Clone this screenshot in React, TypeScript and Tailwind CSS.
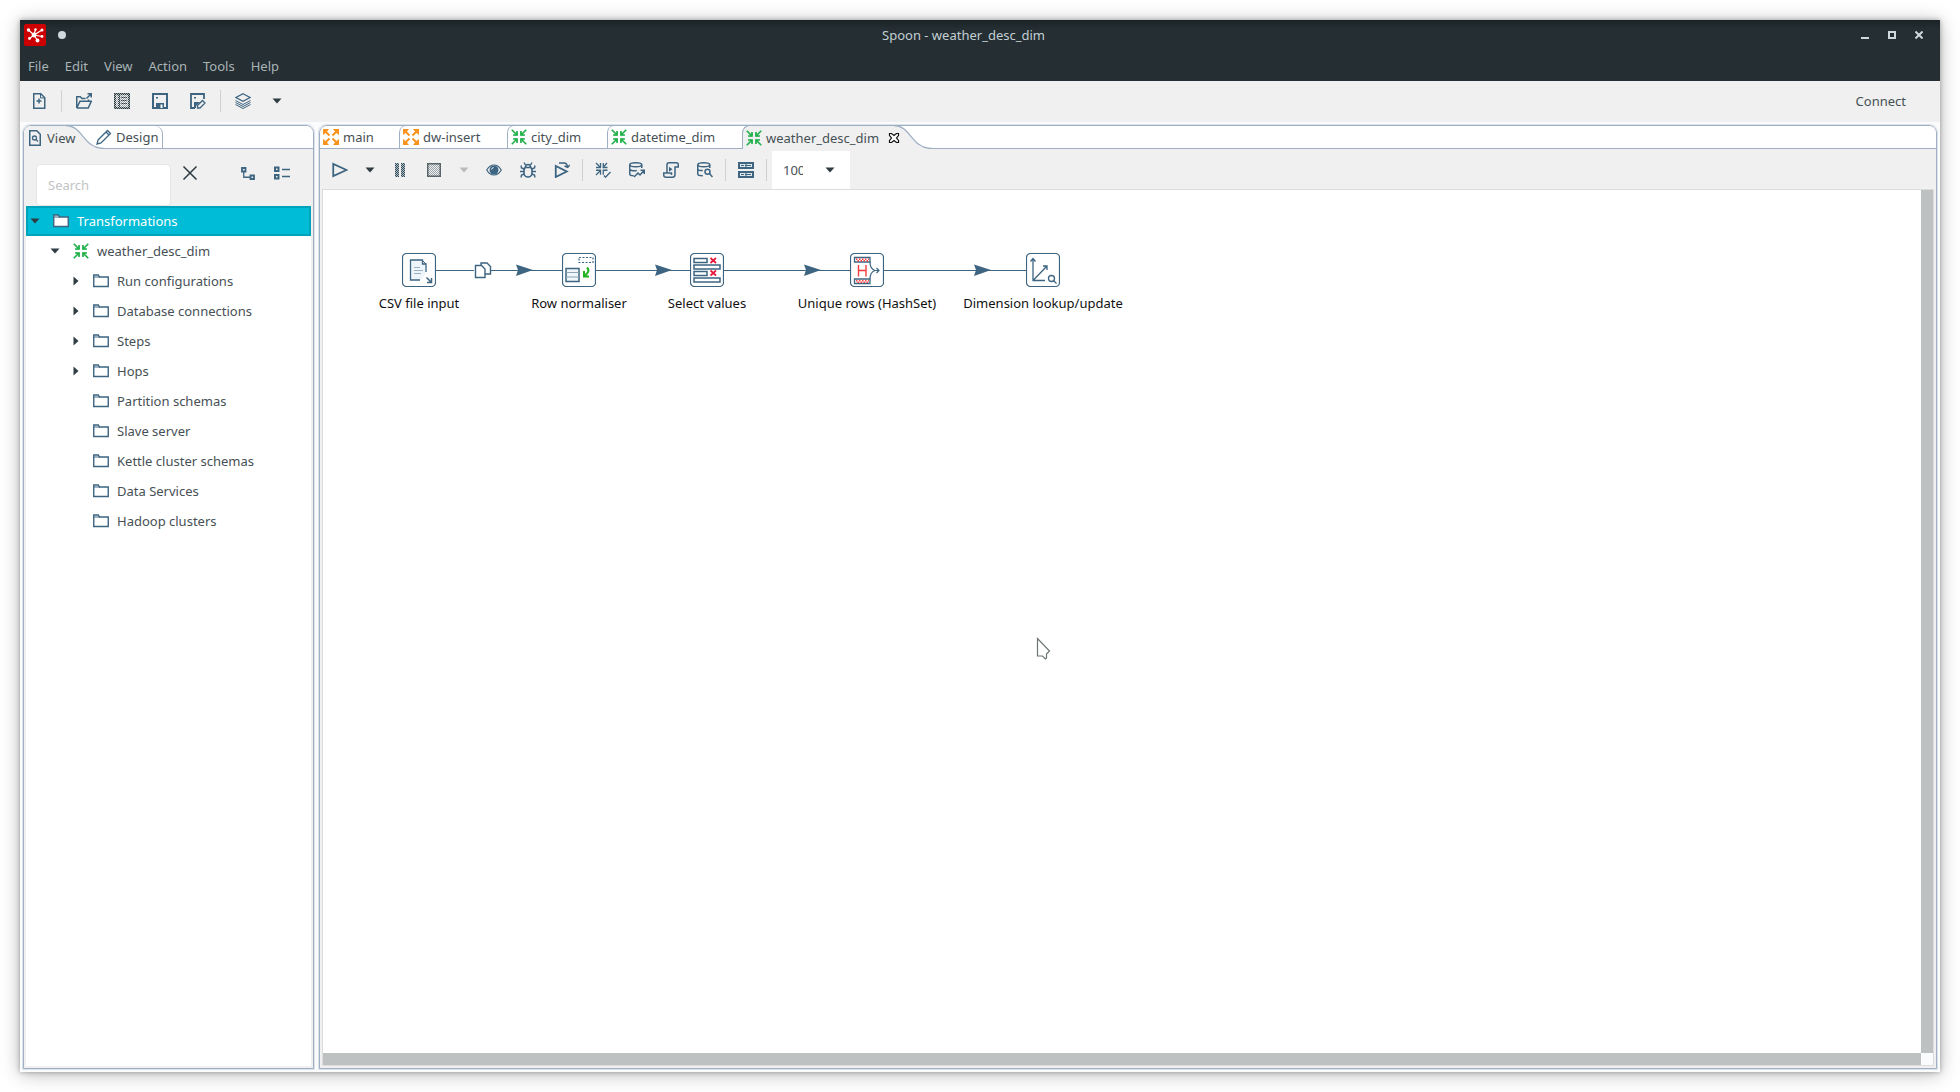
import React, { useState } from "react";

const INK = "#3d6480";

function Svg({ children, w = 16, h = 16, className = "" }: { children: React.ReactNode; w?: number; h?: number; className?: string }) {
  return (
    <svg width={w} height={h} viewBox={`0 0 ${w} ${h}`} fill="none" stroke={INK} strokeWidth="1.5" className={`shrink-0 ${className}`} aria-hidden="true">
      {children}
    </svg>
  );
}

/* ---------- icons ---------- */
const AppLogo = () => (
  <svg width="22" height="22" viewBox="0 0 22 22" className="shrink-0" aria-hidden="true">
    <rect width="22" height="22" rx="2" fill="#cc0000" />
    <path d="M10 11 4.500 6M10 11 11.500 5.500M10 11 18 6M10 11 18 12.500M10 11 13.500 16.500M10 11 5.500 14.500" stroke="#fff" strokeWidth="1.200" />
    <g fill="#fff">
      <circle cx="10" cy="11" r="2.400" />
      <circle cx="4.500" cy="6" r="1.700" />
      <circle cx="11.500" cy="5.500" r="1.200" />
      <circle cx="18" cy="6" r="1.500" />
      <circle cx="18" cy="12.500" r="1.400" />
      <circle cx="13.500" cy="16.500" r="1.900" />
      <circle cx="5.500" cy="14.500" r="1.400" />
    </g>
  </svg>
);
const NewFile = () => (
  <Svg>
    <path d="M2.750.75h7l4 4v10.500h-11zM8 5.500v5M5.500 8h5" />
    <path d="M9.500 1v4h4" strokeWidth="1" />
  </Svg>
);
const OpenFile = () => (
  <Svg>
    <path d="M.75 15V3.750h3.500L6 5.500h3.500M.75 15h11.500l3-6.750H4L.75 15M12.500 8V6.500" />
    <path d="M10.500 5.500 15 1M11.500.75h3.750V4.500" />
  </Svg>
);
const Checker = ({ id }: { id: string }) => (
  <defs>
    <pattern id={id} width="2" height="2" patternUnits="userSpaceOnUse">
      <rect width="1" height="1" fill="#2b3940" stroke="none" />
      <rect x="1" y="1" width="1" height="1" fill="#2b3940" stroke="none" />
    </pattern>
    <pattern id={id + "-soft"} width="2" height="2" patternUnits="userSpaceOnUse">
      <rect width="1" height="1" fill="#9aa3a8" stroke="none" />
      <rect x="1" y="1" width="1" height="1" fill="#9aa3a8" stroke="none" />
    </pattern>
  </defs>
);
const Repository = () => (
  <Svg>
    <Checker id="ck-repo" />
    <g stroke="none">
      <path d="M0 0h16v16H0z" fill="url(#ck-repo-soft)" />
      <path d="M0 0h16v16H0zM2 2v12h12V2z" fillRule="evenodd" fill="url(#ck-repo)" />
      <path d="M4 2h2v12H4zM7 4h6v1H7zM7 7h6v1H7zM7 10h6v1H7z" fill="url(#ck-repo)" />
      <path d="M0 0h16v16H0zM1.500 1.500v13h13v-13z" fillRule="evenodd" fill="#2b3940" opacity=".45" />
      <path d="M5 2h1v12H5zM7 4h6v1H7zM7 7h6v1H7zM7 10h6v1H7z" fill="#2b3940" opacity=".45" />
    </g>
  </Svg>
);
const Save = () => (
  <Svg>
    <rect x="1" y="1" width="14" height="14" strokeWidth="2" />
    <path d="M4 10h8v5H4z" fill={INK} stroke="none" />
    <path d="M8.500 11.500h2V15h-2z" fill="#fff" stroke="none" />
    <path d="M4 4h2v1.500H4z" fill={INK} stroke="none" />
  </Svg>
);
const SaveAs = () => (
  <Svg>
    <path d="M14 6V1H1v14h4" strokeWidth="1.800" />
    <path d="M4 4h2v1.500H4zM4 9h6l-4 4v2H4z" fill={INK} stroke="none" />
    <path d="m7.500 12.500 5-5 2.500 2.500-5 5H7.500z" strokeWidth="1.300" />
  </Svg>
);
const Layers = () => (
  <Svg>
    <path d="M8 .75 15 4.500 8 8.250 1 4.500z" strokeWidth="1.200" />
    <path d="m.5 7.500 7.500 4 7.500-4M.5 9.500l7.500 4 7.500-4M.5 11.500l7.500 4 7.500-4" strokeWidth="1" />
  </Svg>
);
const Caret = ({ color = "#2f3d43" }: { color?: string }) => (
  <svg width="10" height="6" viewBox="0 0 10 6" className="shrink-0" aria-hidden="true">
    <path d="M.5.500h9L5 5.500z" fill={color} />
  </svg>
);
const CaretRight = () => (
  <svg width="6" height="10" viewBox="0 0 6 10" className="shrink-0" aria-hidden="true">
    <path d="M.5.500v9L5.500 5z" fill="#2f3d43" />
  </svg>
);
const ViewIcon = () => (
  <Svg w={12}>
    <path d="M.75.750h7l3.500 3.500v11H.75z" />
    <circle cx="5.500" cy="8" r="2" strokeWidth="1.300" />
    <path d="M7 9.500 9 11.500" strokeWidth="1.300" />
  </Svg>
);
const DesignIcon = () => (
  <Svg>
    <path d="M2 11 11.500 1.500l3 3L5 14l-4 1zM10 3l3 3" strokeWidth="1.300" />
  </Svg>
);
const Run = () => (
  <Svg>
    <path d="M1.250 2v12L14.500 8z" strokeWidth="1.800" />
  </Svg>
);
const Pause = () => (
  <Svg>
    <Checker id="ck-pause" />
    <path d="M3 1h4v14H3zM9 1h4v14H9z" fill="url(#ck-pause)" stroke="none" />
    <path d="M3 1h4v14H3zM9 1h4v14H9z" fill={INK} opacity=".35" stroke="none" />
  </Svg>
);
const Stop = () => (
  <Svg>
    <Checker id="ck-stop" />
    <path d="M1 1h14v14H1z" fill="url(#ck-stop-soft)" stroke="none" />
    <path d="M1 1h14v14H1zM2.500 2.500v11h11v-11z" fillRule="evenodd" fill="#2b3940" opacity=".7" stroke="none" />
  </Svg>
);
const Eye = () => (
  <Svg>
    <path d="M.75 8C3 4 5.500 3 8 3s5 1 7.250 5C13 12 10.500 13 8 13S3 12 .75 8z" strokeWidth="1.200" />
    <circle cx="8" cy="8" r="4.500" fill={INK} stroke="none" />
    <path d="M5.500 7.500A2.500 2.500 0 0 1 7.500 5.500" stroke="#fff" strokeWidth="1" />
  </Svg>
);
const Bug = () => (
  <Svg>
    <path d="M5 5.500h6l1 2.500v3c0 2.500-2 4-4 4s-4-1.500-4-4V8zM5.500 5.500C5.500 1.500 10.500 1.500 10.500 5.500" strokeWidth="1.600" />
    <path d="M5.500 3 4 .5M10.500 3 12 .5M4.500 7 1.500 6 1 3.500M11.500 7l3-1L15 3.500M4 9.500H0M12 9.500h4M4.500 12l-3 1L1 15.500M11.500 12l3 1 .5 2.500" strokeWidth="1.400" />
  </Svg>
);
const Replay = () => (
  <Svg>
    <path d="M1.750 4v11l11-5.500z" strokeWidth="1.800" />
    <path d="M5 1h5.500c1.500 0 2.500 1.500 3 3.500M15.750 3l-2 2.500L10.500 4" strokeWidth="1.400" />
  </Svg>
);
/* four arrows pointing at the centre */
const ArrowsIn = ({ color = "#22b14c" }: { color?: string }) => (
  <Svg>
    <g stroke={color} strokeWidth="1.700">
      <path d="M.75.750 5.500 5.500M15.250.750 10.500 5.500M.75 15.250 5.500 10.500M15.250 15.250 10.500 10.500" />
      <path d="M2 6h4V2M14 6h-4V2M2 10h4v4M14 10h-4v4" />
    </g>
    <path d="M3 6.500h3.500V3zM13 6.500H9.500V3zM3 9.500h3.500V13zM13 9.500H9.500V13z" fill={color} stroke="none" />
  </Svg>
);
/* four arrows pointing outwards */
const ArrowsOut = () => (
  <Svg>
    <path d="M6.500 6.500 2 2M9.500 6.500 14 2M6.500 9.500 2 14M9.500 9.500 14 14" stroke="#f7941e" strokeWidth="2" />
    <path d="M0 0h6L4.500 2 2 4.500 0 6zM16 0v6l-2-1.500L11.500 2 10 0zM0 16v-6l2 1.500L4.500 14 6 16zM16 16h-6l1.500-2 2.500-2.500 2-1.500z" fill="#f7941e" stroke="none" />
  </Svg>
);
const Verify = () => (
  <Svg>
    <g strokeWidth="1.300">
      <path d="m1 1 4 4M12 1 8.500 5M1 13l4-4" />
      <path d="M1 5.500h4.500V1M12.500 5.500H8.250V1M1 8.250h4.500v4.500M12.500 8.250H8.250v4.500" />
      <path d="m9 13.500 1.500 1.750L15.500 10" />
    </g>
  </Svg>
);
const Impact = () => (
  <Svg>
    <ellipse cx="6.750" cy="2.750" rx="6" ry="2" />
    <path d="M.75 2.750V12c0 1 2 1.750 4 1.750M12.750 2.750V6M.75 7.500c1 1.250 5 1.500 7 1" />
    <path d="M5 15l4-4 2 2 4-4.500M11.500 8.250h3.750V12" />
  </Svg>
);
const Sql = () => (
  <Svg>
    <path d="M4 11V2.500C4 1.500 5 .750 6 .750h7.500c1 0 1.750.750 1.750 2V5H12v7.500c0 1.500-1 2.750-2.500 2.750H3C1.500 15.250.75 14 .75 13v-2H8.500v2" />
    <path d="M6 4.750v5L9.500 7.250z" fill={INK} stroke="none" />
  </Svg>
);
const Explore = () => (
  <Svg>
    <ellipse cx="6.750" cy="2.750" rx="6" ry="2" />
    <path d="M.75 2.750V12c0 1 2 1.750 5 1.750M12.750 2.750V6M.75 7.500c1 1 3 1.250 5 1" />
    <circle cx="10.500" cy="9.750" r="2.500" />
    <path d="m12.500 11.500 3 3.500" />
  </Svg>
);
const Results = () => (
  <Svg>
    <path d="M0 0h16v7H0zM0 9h16v7H0z" fill={INK} stroke="none" />
    <path d="M2 2h12v3H2zM2 11h12v3H2z" fill="#dfe6ea" stroke="none" />
    <path d="M3 3.500h3M7 3.500h6M3 12.500h3M7 12.500h6M8 2v3M8 11v3" strokeWidth="1" />
  </Svg>
);
const Clear = () => (
  <Svg>
    <path d="m1.500 1.500 13 13M14.500 1.500l-13 13" stroke="#2b3940" strokeWidth="1.500" />
  </Svg>
);
const ExpandTree = () => (
  <Svg>
    <path d="M2 2h3.500v3.500H2zM10.500 9.500H14V13h-3.500z" strokeWidth="1.800" />
    <path d="M3.750 5.500v5.750h6.500" strokeWidth="1.300" />
  </Svg>
);
const CollapseTree = () => (
  <Svg>
    <path d="M1 2.500h3.500V6H1zM1 10h3.500v3.500H1z" strokeWidth="2" />
    <path d="M8 4.500h8M8 11.500h8" strokeWidth="1.300" />
  </Svg>
);
const Folder = ({ filled = false }: { filled?: boolean }) => (
  <Svg>
    <path d="M.75 2h4.500L6.500 4h8.750v9.500H.75z" fill={filled ? "#fff" : "none"} strokeWidth="1.400" />
    <path d="M1 4h6" strokeWidth="1" />
  </Svg>
);
const CloseTab = () => (
  <svg width="12" height="12" viewBox="0 0 12 12" aria-hidden="true">
    <path d="M1.500 1.500h2L6 3.500l2.500-2h2v2L8.500 6l2 2.500v2h-2L6 8.500l-2.500 2h-2v-2l2-2.500-2-2.500z" fill="#fff" stroke="#111" strokeWidth="1.200" />
  </svg>
);

/* ---------- toolbar parts ---------- */
function ToolButton({ label, size = "normal", disabled, children }: { label: string; size?: "normal" | "wide" | "caret" | "widecaret"; disabled?: boolean; children: React.ReactNode }) {
  const width = { normal: "w-[34px]", wide: "w-[38px]", caret: "w-[26px]", widecaret: "w-[30px]" }[size];
  return (
    <button type="button" aria-label={label} title={label} disabled={disabled} className={`flex h-8 items-center justify-center ${width}`}>
      {children}
    </button>
  );
}
const Separator = () => (
  <div className="flex w-[7px] justify-center">
    <div className="h-[22px] w-px bg-[#d0d0d0]" />
  </div>
);

function TabEdge() {
  return (
    <svg width="10" height="24" viewBox="0 0 10 24" fill="none" className="absolute top-0 left-0" aria-hidden="true">
      <path d="M.5 24V8C.5 4 3 .5 7 .5" stroke="#9fb0c4" />
    </svg>
  );
}
function ActiveSwoop() {
  return (
    <svg width="40" height="24" viewBox="0 0 40 24" className="absolute top-0 left-full" aria-hidden="true">
      <path d="M0 1C17 1 17 23.500 38 23.500V24H0z" fill="#f0f0f0" />
      <path d="M0 .5C17 .5 17 23.500 38 23.500" fill="none" stroke="#9fb0c4" strokeWidth="1.300" />
    </svg>
  );
}

const tabs = [
  { name: "main", out: true, width: "w-20" },
  { name: "dw-insert", out: true, width: "w-[108px]" },
  { name: "city_dim", out: false, width: "w-[100px]" },
  { name: "datetime_dim", out: false, width: "w-[135px]" },
];

const folders = [
  { name: "Run configurations", open: true },
  { name: "Database connections", open: true },
  { name: "Steps", open: true },
  { name: "Hops", open: true },
  { name: "Partition schemas" },
  { name: "Slave server" },
  { name: "Kettle cluster schemas" },
  { name: "Data Services" },
  { name: "Hadoop clusters" },
];

/* ---------- canvas ---------- */
function CsvStep() {
  return (
    <g>
      <path d="M8.500 7h11l4 4v9l-4 6.500h-11z" fill="#eef6fc" stroke="none" />
      <path d="M24 19v-8h-3.500V7H8.500v20H18" strokeWidth="1.300" />
      <path d="M20.500 7.500 24 11" strokeWidth="1" />
      <path d="M12 14.500h6M12 17.500h9M12 20.500h7" stroke="#9ab2c4" strokeWidth="1" />
      <path d="m24.500 24.500 5 5M29.500 25v4.500H25" strokeWidth="1.500" />
    </g>
  );
}
function NormaliserStep() {
  return (
    <g>
      <rect x="17" y="4.500" width="14" height="5" strokeDasharray="2 1.500" strokeWidth="1.200" />
      <rect x="4" y="15.500" width="13" height="13" fill="#f1f6fa" />
      <path d="M4 19.500h13M4 24h13" strokeWidth="1" stroke="#8aa3b5" />
      <path d="M25 14.500c3 3 1 6-3 8.500M22 18v5.500h5" stroke="#1fb41f" strokeWidth="2" />
    </g>
  );
}
function SelectStep() {
  return (
    <g>
      <rect x="4" y="5.500" width="13" height="4" />
      <rect x="4" y="12" width="26" height="4" />
      <rect x="4" y="18.500" width="13" height="4" />
      <rect x="4" y="25" width="26" height="4" />
      <path d="m20.500 5 5.500 5M26 5l-5.500 5M20.500 17.500l5.500 5M26 17.500l-5.500 5" stroke="#e8173b" strokeWidth="1.700" />
    </g>
  );
}
function UniqueStep() {
  return (
    <g>
      <path d="M4.500 4.500h15.500v4.500H4.500zM4.500 26h15.500v4.500H4.500z" strokeWidth="1.300" />
      <path d="M6 6.200h13M6 27.700h13" stroke="#ff4040" strokeDasharray="1.500 1.500" strokeWidth="1.500" />
      <path d="M7.500 7.700h12M7.500 29.200h12" stroke="#ff4040" strokeDasharray="1.500 1.500" strokeWidth="1.500" />
      <path d="M8.500 12v11.500M16 12v11.500M8.500 17.500H16" stroke="#f23b3b" strokeWidth="1.400" />
      <path d="M20 9c0 5 2 7.500 5 8.500M20 26c0-5 2-7.500 5-8.500M24 17.500h5M26.500 15l2.500 2.500-2.500 2.500" strokeWidth="1.200" />
    </g>
  );
}
function DimensionStep() {
  return (
    <g>
      <path d="M7 6v21.500h12M7.500 27 20.500 13.500M4.500 8.500 7 5.500l2.500 3M17 13h4v4" strokeWidth="1.300" />
      <circle cx="25.500" cy="25.500" r="3" strokeWidth="1.300" />
      <path d="m27.500 27.500 3 3" strokeWidth="1.300" />
    </g>
  );
}

const steps = [
  { name: "CSV file input", pos: "left-[6px]", icon: <CsvStep /> },
  { name: "Row normaliser", pos: "left-[166px]", icon: <NormaliserStep /> },
  { name: "Select values", pos: "left-[294px]", icon: <SelectStep /> },
  { name: "Unique rows (HashSet)", pos: "left-[454px]", icon: <UniqueStep /> },
  { name: "Dimension lookup/update", pos: "left-[630px]", icon: <DimensionStep /> },
];

function Canvas() {
  return (
    <div className="relative min-w-0 flex-1 overflow-hidden bg-white">
      <svg width="760" height="100" viewBox="0 0 760 100" fill="none" className="absolute top-0 left-0" aria-hidden="true">
        <path d="M113 80.500h38M167 80.500h72M273 80.500h94M401 80.500h126M561 80.500h142" stroke={INK} />
        <path d="M193 74.500 210 80 193 86 195 80zM332 74.500 349 80 332 86 334 80zM481 74.500 498 80 481 86 483 80zM651 74.500 668 80 651 86 653 80z" fill={INK} />
        <g stroke={INK} strokeWidth="1.400" fill="#fff">
          <path d="M158 84V73h6l3.500 3.500V84z" />
          <path d="M152.500 75.500h6l3.500 3.500v8.500h-9.500z" />
        </g>
      </svg>
      {steps.map((s) => (
        <div key={s.name} className={`absolute top-[63px] flex w-[180px] flex-col items-center gap-[7px] ${s.pos}`}>
          <svg width="34" height="34" viewBox="0 0 34 34" fill="none" stroke={INK} strokeWidth="1.500" aria-hidden="true">
            <rect x=".5" y=".5" width="33" height="33" rx="4" strokeWidth="1.200" fill="#fff" />
            {s.icon}
          </svg>
          <span className="leading-[18px] whitespace-nowrap text-[#111]">{s.name}</span>
        </div>
      ))}
      <svg width="16" height="24" viewBox="0 0 16 24" className="absolute top-[447px] left-[713px]" aria-hidden="true">
        <path d="M1.500 1.500v17.500h5l3 3 1-1v-4l3-3z" fill="#fff" stroke="#6c7674" strokeWidth="1.200" />
      </svg>
    </div>
  );
}

const menus = ["File", "Edit", "View", "Action", "Tools", "Help"];

export default function App() {
  const [query, setQuery] = useState("");
  const [zoom, setZoom] = useState("100%");
  return (
    <div className="flex min-h-screen bg-white p-5 font-['Noto_Sans',sans-serif] text-[13px] leading-5 text-[#465055]">
      <div className="flex min-w-0 flex-1 flex-col bg-[#fafbfd] shadow-[0_2px_18px_rgba(0,0,0,0.28),0_0_5px_rgba(0,0,0,0.3)]">
        <header className="bg-[#242e33] bg-linear-to-b from-[#1b2325] from-0% to-[#242e33] to-15%">
          <div className="flex h-[30px] items-center pl-1">
            <AppLogo />
            <span className="ml-3 size-2 rounded-full bg-[#cfd8dc]" />
            <h1 className="flex-1 pl-2.5 text-center text-[#c3ced2]">Spoon - weather_desc_dim</h1>
            <div className="flex items-center pr-2">
              <button type="button" aria-label="Minimize" className="flex h-7 w-[27px] items-center justify-center">
                <Svg w={8} h={8}><path d="M0 7h8" stroke="#cfd8dc" strokeWidth="2" /></Svg>
              </button>
              <button type="button" aria-label="Maximize" className="flex h-7 w-[27px] items-center justify-center">
                <Svg w={8} h={8}><path d="M1 1h6v6H1z" stroke="#cfd8dc" strokeWidth="2" /></Svg>
              </button>
              <button type="button" aria-label="Close" className="flex h-7 w-[27px] items-center justify-center">
                <Svg w={8} h={8}><path d="m.5.500 7 7M7.500.500l-7 7" stroke="#cfd8dc" strokeWidth="2" /></Svg>
              </button>
            </div>
          </div>
          <nav className="flex h-[31px] items-center gap-4 px-2 text-[#a9b4b6]">
            {menus.map((m) => (
              <button type="button" key={m}>{m}</button>
            ))}
          </nav>
        </header>

        <div className="flex h-[41px] items-center bg-[#f0f0f0] pb-px">
          <ToolButton label="New file" size="wide"><NewFile /></ToolButton>
          <Separator />
          <ToolButton label="Open file" size="wide"><OpenFile /></ToolButton>
          <ToolButton label="Explore repository" size="wide"><Repository /></ToolButton>
          <ToolButton label="Save" size="wide"><Save /></ToolButton>
          <ToolButton label="Save as" size="wide"><SaveAs /></ToolButton>
          <Separator />
          <ToolButton label="Perspective" size="wide"><Layers /></ToolButton>
          <ToolButton label="Choose perspective" size="widecaret"><Caret /></ToolButton>
          <button type="button" className="mr-[34px] ml-auto">Connect</button>
        </div>

        <main className="flex min-h-0 flex-1 gap-[3px] px-0.5 pt-0.5 pb-0.5">
          <aside className="flex w-[293px] shrink-0 flex-col rounded-t-lg border border-[#dde1e8]">
            <div className="flex flex-1 flex-col overflow-hidden rounded-t-lg border border-[#9fb0c4] bg-[#f0f0f0]">
              <div role="tablist" className="flex h-[23px] border-b border-[#9fb0c4] bg-white">
                <button type="button" role="tab" aria-selected="true" className="relative -mb-px flex h-[23px] w-[42px] items-center gap-1.5 bg-[#f0f0f0] pl-[5px]">
                  <div className="absolute -top-px left-full"><ActiveSwoop /></div>
                  <ViewIcon />
                  <span className="relative">View</span>
                </button>
                <button type="button" role="tab" aria-selected="false" className="ml-[26px] flex h-[22px] w-[71px] items-center gap-1 rounded-tr-lg border-r border-[#9fb0c4] pl-1">
                  <DesignIcon />
                  Design
                </button>
              </div>
              <div className="flex h-[57px] items-start pt-[15px] pl-3">
                <input
                  type="text"
                  aria-label="Search"
                  placeholder="Search"
                  value={query}
                  onChange={(e) => setQuery(e.target.value)}
                  className="h-[42px] w-[135px] rounded-sm border border-[#e6e6e6] bg-white px-[11px] outline-none placeholder:text-[#bfc4c6]"
                />
                <button type="button" aria-label="Clear search" className="ml-[11px] pt-px"><Clear /></button>
                <button type="button" aria-label="Expand all" className="ml-[42px] pt-[2px]"><ExpandTree /></button>
                <button type="button" aria-label="Collapse all" className="ml-[18px] pt-px"><CollapseTree /></button>
              </div>
              <ul role="tree" className="mx-0.5 mb-0.5 flex-1 bg-white">
                <li role="treeitem" aria-selected="true" className="flex h-[30px] items-center border-2 border-[#00a3b9] bg-[#00bcd6] pl-[2px] text-white">
                  <Caret />
                  <span className="ml-[13px]"><Folder filled /></span>
                  <span className="ml-2">Transformations</span>
                </li>
                <li role="treeitem" className="flex h-[30px] items-center pl-6">
                  <Caret />
                  <span className="ml-[13px]"><ArrowsIn /></span>
                  <span className="ml-2">weather_desc_dim</span>
                </li>
                {folders.map((f) => (
                  <li role="treeitem" key={f.name} className="flex h-[30px] items-center pl-[47px]">
                    <span className="w-5">{f.open && <CaretRight />}</span>
                    <Folder />
                    <span className="ml-2">{f.name}</span>
                  </li>
                ))}
              </ul>
            </div>
          </aside>

          <section className="flex min-w-0 flex-1 flex-col rounded-t-lg border border-[#dde1e8]">
            <div className="flex flex-1 flex-col overflow-hidden rounded-t-lg border border-[#9fb0c4] bg-[#f0f0f0]">
              <div role="tablist" className="-mt-px -ml-px flex h-6 border-b border-[#9fb0c4] bg-linear-to-b from-[#9fb0c4] from-[1px] to-white to-[1px]">
                {tabs.map((t) => (
                  <button type="button" role="tab" aria-selected="false" key={t.name} className={`relative flex h-6 items-center gap-1 pl-1 ${t.width}`}>
                    <TabEdge />
                    {t.out ? <ArrowsOut /> : <ArrowsIn />}
                    {t.name}
                  </button>
                ))}
                <div className="relative flex h-6 w-[152px] items-center gap-[9px] rounded-tl-lg border-t border-l border-[#9fb0c4] bg-[#f0f0f0] pl-[3px]">
                  <button type="button" role="tab" aria-selected="true" className="flex items-center gap-1">
                    <ArrowsIn />
                    weather_desc_dim
                  </button>
                  <div className="absolute -top-px left-full"><ActiveSwoop /></div>
                  <button type="button" aria-label="Close tab" className="relative"><CloseTab /></button>
                </div>
              </div>
              <div className="flex h-10 items-center pt-0.5 pl-[3px]">
                <ToolButton label="Run"><Run /></ToolButton>
                <ToolButton label="Run options" size="caret"><Caret /></ToolButton>
                <ToolButton label="Pause" disabled><Pause /></ToolButton>
                <ToolButton label="Stop" disabled><Stop /></ToolButton>
                <ToolButton label="Stop options" size="caret" disabled><Caret color="#b9bbbc" /></ToolButton>
                <ToolButton label="Preview"><Eye /></ToolButton>
                <ToolButton label="Debug"><Bug /></ToolButton>
                <ToolButton label="Replay"><Replay /></ToolButton>
                <Separator />
                <ToolButton label="Verify"><Verify /></ToolButton>
                <ToolButton label="Impact analysis"><Impact /></ToolButton>
                <ToolButton label="Generate SQL"><Sql /></ToolButton>
                <ToolButton label="Explore database"><Explore /></ToolButton>
                <Separator />
                <ToolButton label="Show results"><Results /></ToolButton>
                <Separator />
                <div className="ml-0.5 flex h-[38px] w-[78px] items-center bg-white pl-[11px]">
                  <input type="text" aria-label="Zoom" value={zoom} onChange={(e) => setZoom(e.target.value)} className="w-5 bg-transparent outline-none" />
                  <button type="button" aria-label="Choose zoom" className="ml-[22px] py-2"><Caret /></button>
                </div>
              </div>
              <div className="mx-0.5 mb-0.5 flex flex-1 flex-col border border-[#dcdcdc]">
                <div className="flex flex-1">
                  <Canvas />
                  <div className="w-3 bg-[#bdc1c2]" />
                </div>
                <div className="flex h-3">
                  <div className="flex-1 bg-[#bdc1c2]" />
                  <div className="w-3 bg-[#fafbfd]" />
                </div>
              </div>
            </div>
          </section>
        </main>
      </div>
    </div>
  );
}
